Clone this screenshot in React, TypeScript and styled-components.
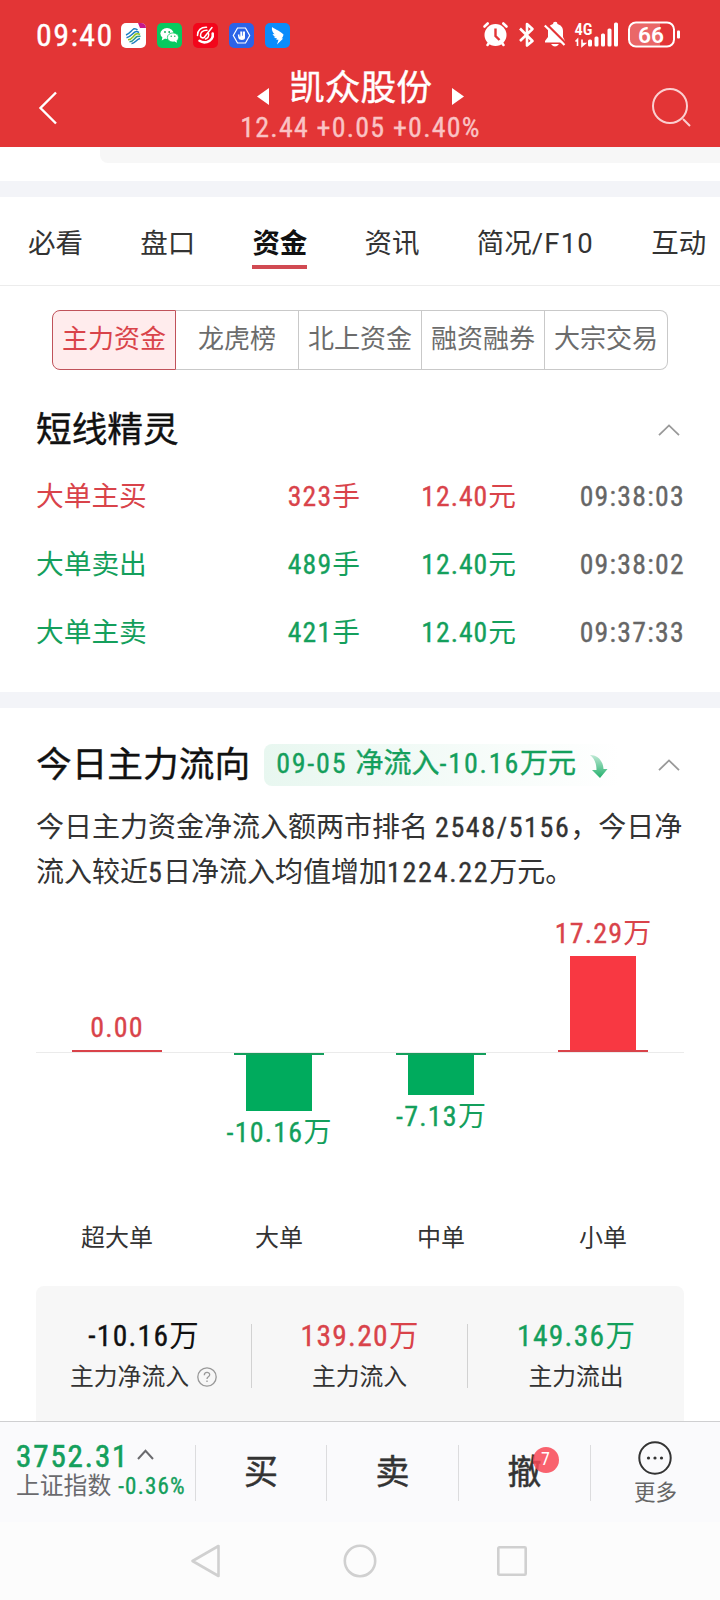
import React from "react";
import styled, { createGlobalStyle } from "styled-components";

const RED = "#d9434a";
const GREEN = "#149f5c";
const INK = "#333333";

const toneColor = { red: RED, green: GREEN, black: "#111111" };
type Tone = keyof typeof toneColor;

const GlobalStyle = createGlobalStyle`
  * { box-sizing: border-box; }
  body {
    margin: 0;
    background: #fff;
    font-family: Roboto, "Noto Sans CJK SC", sans-serif;
    color: ${INK};
  }
`;

const Screen = styled.div`
  width: 720px;
  height: 1600px;
  overflow: hidden;
  display: flex;
  flex-direction: column;
  background: #fff;
`;

const Num = styled.span<{ $ls?: number; $stroke?: number }>`
  font-family: "Roboto Condensed", Roboto, sans-serif;
  letter-spacing: ${(p) => p.$ls ?? 1.2}px;
  -webkit-text-stroke: ${(p) => p.$stroke ?? 0.35}px currentColor;
`;

/* ---------- header ---------- */

const Header = styled.header`
  height: 147px;
  flex: none;
  background: #e33536;
  color: #fff;
`;

const StatusBar = styled.div`
  height: 70px;
  padding: 0 40px 0 36px;
  display: flex;
  align-items: center;
  justify-content: space-between;
`;

const StatusGroup = styled.div<{ $gap: number }>`
  display: flex;
  align-items: center;
  gap: ${(p) => p.$gap}px;
`;

const Clock = styled.div`
  width: 74px;
  font-size: 32px;
  line-height: 35px;
  white-space: nowrap;
`;

const TitleBar = styled.div`
  height: 77px;
  padding: 0 29px 0 38px;
  display: flex;
  justify-content: space-between;
`;

const BackIcon = styled.svg`
  margin-top: 21px;
`;

const SearchIcon = styled.svg`
  margin-top: 17px;
`;

const StockHeading = styled.div`
  padding-left: 12px;
  display: flex;
  flex-direction: column;
  align-items: center;
`;

const StockName = styled.div`
  display: flex;
  gap: 20px;
  height: 39px;
  font-size: 35.7px;
  line-height: 36px;
  -webkit-text-stroke: 0.4px currentColor;
  svg { margin-top: 18px; }
`;

const Quote = styled.div`
  font-size: 28px;
  line-height: 38px;
  color: #fac3c4;
  white-space: nowrap;
`;

/* ---------- tabs ---------- */

const PeekCard = styled.div`
  height: 16px;
  flex: none;
  margin-left: 100px;
  background: #f7f7f7;
  border-bottom-left-radius: 8px;
`;

const Band = styled.div<{ $mt: number }>`
  height: 16px;
  flex: none;
  margin-top: ${(p) => p.$mt}px;
  background: #f3f4f8;
`;

const Tabs = styled.nav`
  height: 89px;
  flex: none;
  padding-left: 28px;
  display: flex;
  gap: 57.2px;
  border-bottom: 1px solid #ececec;
  white-space: nowrap;
`;

const Tab = styled.div<{ $active?: boolean }>`
  height: 72px;
  font-size: 27.5px;
  line-height: 93px;
  border-bottom: 4px solid ${(p) => (p.$active ? "#d14a52" : "transparent")};
  color: ${(p) => (p.$active ? "#111" : INK)};
  font-weight: ${(p) => (p.$active ? 700 : 400)};
`;

const TabLatin = styled.span`
  letter-spacing: 1.2px;
`;

const Segments = styled.div`
  flex: none;
  height: 60px;
  margin: 24px 52px 0;
  display: grid;
  grid-template-columns: 124px repeat(4, 1fr);
`;

const Segment = styled.div<{ $active?: boolean }>`
  border: 1px solid ${(p) => (p.$active ? "#c0525a" : "#c9c9c9")};
  border-left-width: ${(p) => (p.$active ? 1 : 0)}px;
  background: ${(p) => (p.$active ? "#ffeced" : "#fff")};
  color: ${(p) => (p.$active ? RED : "#6c6c6c")};
  font-size: 26px;
  line-height: 56px;
  text-align: center;
  white-space: nowrap;
  &:first-child { border-radius: 8px 0 0 8px; }
  &:last-child { border-radius: 0 8px 8px 0; }
`;

/* ---------- sections ---------- */

const SectionHead = styled.div<{ $mt: number }>`
  flex: none;
  margin-top: ${(p) => p.$mt}px;
  height: 42px;
  padding: 0 40px 0 36px;
  display: flex;
  align-items: center;
`;

const SectionTitle = styled.h2`
  margin: 0;
  font-size: 35.7px;
  font-weight: 400;
  line-height: 44px;
  color: #111;
  -webkit-text-stroke: 0.4px currentColor;
`;

const Collapse = styled.svg`
  margin-left: auto;
`;

const Trades = styled.div`
  flex: none;
  margin-top: 12px;
  padding: 0 36px;
`;

const Trade = styled.div<{ $tone: Tone }>`
  height: 68px;
  display: grid;
  grid-template-columns: 124px 200px 156px 169px;
  font-size: 27.7px;
  line-height: 68px;
  color: ${(p) => toneColor[p.$tone]};
  white-space: nowrap;
`;

const TradeCell = styled.div<{ $muted?: boolean }>`
  text-align: right;
  &:first-child { text-align: left; }
  ${(p) => (p.$muted ? "color: #666;" : "")}
`;

const FlowBadge = styled.div`
  height: 42px;
  width: 356px;
  margin-left: 14px;
  padding: 0 12px;
  border-radius: 8px;
  display: flex;
  gap: 14px;
  font-size: 28px;
  line-height: 40px;
  color: ${GREEN};
  white-space: nowrap;
  background: linear-gradient(90deg, #e8f7f0, #ffffff);
  -webkit-text-stroke: 0.4px currentColor;
  svg { margin-top: 10px; }
`;

const Summary = styled.p`
  flex: none;
  margin: 19px 36px 0;
  font-size: 28px;
  line-height: 45px;
  white-space: nowrap;
`;

/* ---------- chart ---------- */

const Chart = styled.div`
  flex: none;
  height: 360px;
  padding: 0 36px;
  margin-top: 11px;
  display: grid;
  grid-template-columns: repeat(4, 162px);
`;

const ChartColumn = styled.div<{ $tone: Tone }>`
  display: flex;
  flex-direction: column;
  align-items: center;
  color: ${(p) => toneColor[p.$tone]};
`;

const Above = styled.div`
  height: 146px;
  display: flex;
  flex-direction: column;
  justify-content: flex-end;
  align-items: center;
`;

const Below = styled.div`
  width: 100%;
  height: 170px;
  border-top: 1px solid #ebebeb;
  display: flex;
  flex-direction: column;
  align-items: center;
`;

const Tick = styled.div`
  width: 90px;
  height: 2px;
  background: currentColor;
`;

const Bar = styled.div<{ $up?: boolean }>`
  width: 66px;
  background: ${(p) => (p.$up ? "#f83842" : "#00ab5d")};
`;

const BarValue = styled.div`
  font-size: 28px;
  line-height: 43px;
  height: 44px;
  white-space: nowrap;
`;

const Category = styled.div`
  font-size: 24px;
  line-height: 32px;
  color: ${INK};
`;

/* ---------- summary card ---------- */

const Card = styled.div`
  flex: 1;
  margin: 20px 36px 0;
  padding-top: 38px;
  border-radius: 8px 8px 0 0;
  background: #f7f7f7;
  display: grid;
  grid-template-columns: repeat(3, 1fr);
`;

const CardItem = styled.div`
  height: 64px;
  display: flex;
  flex-direction: column;
  align-items: center;
  border-right: 1px solid #d2d2d2;
  &:last-child { border-right: 0; }
`;

const CardValue = styled.div<{ $tone: Tone }>`
  flex: none;
  font-size: 29.5px;
  line-height: 24px;
  height: 32px;
  color: ${(p) => toneColor[p.$tone]};
  white-space: nowrap;
`;

const CardLabel = styled.div`
  flex: none;
  display: flex;
  align-items: center;
  gap: 8px;
  font-size: 23.8px;
  line-height: 42px;
  height: 42px;
  white-space: nowrap;
`;

/* ---------- bottom bar ---------- */

const BottomBar = styled.div`
  height: 101px;
  flex: none;
  border-top: 1px solid #cfcfd1;
  background: #fafafc;
  display: grid;
  grid-template-columns: 196px 131px 132px 132px 129px;
`;

const BottomCell = styled.div`
  height: 56px;
  margin-top: 23px;
  border-right: 1px solid #dcdcde;
  display: flex;
  justify-content: center;
  &:last-child { border-right: 0; }
`;

const IndexCell = styled(BottomCell)`
  padding-left: 16px;
  flex-direction: column;
  justify-content: flex-start;
  white-space: nowrap;
`;

const IndexValue = styled.div`
  display: flex;
  gap: 8px;
  height: 27px;
  font-size: 31px;
  line-height: 24px;
  color: ${GREEN};
  svg { margin-top: 4px; }
`;

const IndexName = styled.div`
  font-size: 23.8px;
  line-height: 34px;
  color: #6a6a6e;
  display: flex;
  gap: 7px;
`;

const IndexChange = styled.span`
  font-size: 23px;
  line-height: 36px;
  color: ${GREEN};
`;

const Action = styled.div`
  position: relative;
  font-size: 34px;
  line-height: 54px;
  color: ${INK};
  -webkit-text-stroke: 0.5px currentColor;
`;

const CountBadge = styled.span`
  position: absolute;
  top: 2px;
  left: 25px;
  width: 26px;
  height: 26px;
  border-radius: 50%;
  background: rgba(248, 72, 86, 0.86);
  color: #fff;
  font-family: "Roboto Condensed", Roboto, sans-serif;
  font-size: 18px;
  line-height: 24px;
  text-align: center;
  -webkit-text-stroke: 0;
`;

const More = styled.div`
  margin-top: -4px;
  display: flex;
  flex-direction: column;
  align-items: center;
  font-size: 21.5px;
  line-height: 36px;
  color: #666;
  svg { flex: none; }
`;

const NavBar = styled.div`
  height: 78px;
  flex: none;
  background: #fcfcfc;
  display: flex;
  justify-content: center;
  align-items: center;
  gap: 118px;
`;

/* ---------- icons ---------- */

const Chevron = () => (
  <Collapse width="22" height="12" viewBox="0 0 22 12" fill="none" stroke="#999" strokeWidth="1.8">
    <path d="M1 11.2 11 1.4 21 11.2" />
  </Collapse>
);

const AppIcons = () => (
  <StatusGroup $gap={11}>
    <svg width="25" height="25" viewBox="0 0 25 25">
      <rect width="25" height="25" rx="5" fill="#fff" />
      <g fill="none" strokeWidth="1.5">
        <path d="M5 12c3-1 5-4 7.500-6q2-1 4 1" stroke="#1c7fc0" />
        <path d="M5.500 14.800c4-1 5.500-4 8.500-6q2-1 4 .8" stroke="#1c7fc0" />
        <path d="M7 16.800c4 0 4.500-3.500 8-5.800q2-.8 4 .5" stroke="#8dc21f" />
        <path d="M8.500 18.800c4 0 4.500-3.500 7.500-5.300l3.500-.3" stroke="#2b9a8e" />
        <path d="M10.500 20.500c3.500.3 4.500-4 8.500-5" stroke="#1c7fc0" />
      </g>
      <path d="M17 0h3a5 5 0 0 1 5 5H19z" fill="#c8168c" />
    </svg>
    <svg width="25" height="25" viewBox="0 0 25 25">
      <rect width="25" height="25" rx="5" fill="#07c95f" />
      <ellipse cx="10" cy="10.500" rx="6.600" ry="5.400" fill="#fff" />
      <path d="M5.500 14l-.8 3.500 3.500-2z" fill="#fff" />
      <ellipse cx="16" cy="14.500" rx="5.600" ry="4.600" fill="#fff" stroke="#07c95f" strokeWidth=".8" />
      <path d="M17.500 18.500l2.500 1.300-.5-2.800z" fill="#fff" />
      <g fill="#07a94f">
        <circle cx="8" cy="9" r=".9" /><circle cx="12.200" cy="9" r=".9" />
        <circle cx="14.200" cy="13.300" r=".7" /><circle cx="17.800" cy="13.300" r=".7" />
      </g>
    </svg>
    <svg width="25" height="25" viewBox="0 0 25 25">
      <rect width="25" height="25" rx="5" fill="#f2061b" />
      <g fill="none" stroke="#fff" strokeLinecap="round">
        <path d="M13.500 4.300C8 4 4.300 7.500 4.500 12.500" strokeWidth="1.500" />
        <path d="M14 7.300c-4-.2-7 2.200-6.500 5.700.4 2 2.500 2.400 4 1.300" strokeWidth="1.600" />
        <path d="M19 4.500 11.500 14" strokeWidth="1.500" />
        <path d="M19.700 10.500c.8 4-1.800 7.300-5.700 8.500-3 .8-5.500.2-7.500-1.200" strokeWidth="2.600" />
        <path d="M15.500 10.500c.8 2.500-.5 4.800-3 5.500" strokeWidth="1.500" />
      </g>
    </svg>
    <svg width="25" height="25" viewBox="0 0 25 25">
      <rect width="25" height="25" rx="5" fill="#2b63e8" />
      <path d="M8.500 5h8l4.200 7.500-4.200 7.500h-8l-4.200-7.500z" fill="none" stroke="#fff" strokeWidth="1.200" />
      <path d="M8.800 11.500h1.700v2h.8V8.500h2v4.300h.7V8.500h2v6.300c0 3-6 3-6.700 0z" fill="#fff" />
    </svg>
    <svg width="25" height="25" viewBox="0 0 25 25">
      <rect width="25" height="25" rx="5" fill="#0a8cfb" />
      <path d="M7 4c3.500 2.500 9 4.500 11.500 7.500-.2 2-1.300 3-1.800 4h1.500L12 21.500l1.500-4.700h-2.300l.8-1.500c-1.500 0-2.800-.6-3.200-1.500l2-.1c-2-.5-3-1.600-3.200-2.700l2 .3C7.500 9.500 6.500 7 7 4z" fill="#fff" />
    </svg>
  </StatusGroup>
);

const SystemIcons = () => (
  <svg width="204" height="30" viewBox="476 19.500 204 30" fill="#fff">
    <circle cx="495.500" cy="34.500" r="11" />
    <g stroke="#fff" strokeWidth="2.600" strokeLinecap="round">
      <path d="M484.500 26l3.200-3M506.500 26l-3.200-3M487.500 44.500l1.500-2M503.500 44.500l-1.500-2" />
    </g>
    <path d="M495.500 28v7.500l4 4" stroke="#e33536" strokeWidth="2.400" fill="none" />
    <path d="M520 28l12.500 12.500-5.500 4.500V23.500l5.500 5-12.500 12" fill="none" stroke="#fff" strokeWidth="2.600" strokeLinejoin="round" />
    <path d="M545 42v-1.500l3-4v-6c0-4 2-6 5-7a2.200 2.200 0 0 1 4.500 0c3 1 5.500 3 5.500 7v6l2 4v1.500zM551 43.500h8q-4 5-8 0z" />
    <path d="M546.500 23.500l20 20" stroke="#e33536" strokeWidth="2.400" />
    <path d="M544.800 25l19.700 19.500" stroke="#fff" strokeWidth="2.200" />
    <text x="574.500" y="34" fontFamily="Roboto Condensed" fontSize="16.500" fontWeight="600" textLength="18" lengthAdjust="spacingAndGlyphs">4G</text>
    <path d="M575.500 41l2-2v6.500M582 39v6.500l3-2.500h-3" fill="none" stroke="#fff" strokeWidth="1.600" />
    <rect x="588" y="39" width="4" height="7" rx="1.500" />
    <rect x="594.500" y="36" width="4" height="10" rx="1.500" />
    <rect x="601" y="33" width="4" height="13" rx="1.500" />
    <rect x="607.500" y="28" width="4" height="18" rx="1.500" />
    <rect x="614" y="22" width="4" height="24" rx="1.500" />
    <path d="M636 23h24v22h-24q-6 0-6-6V29q0-6 6-6z" opacity=".25" />
    <rect x="629" y="22" width="45" height="24" rx="7" fill="none" stroke="#fff" strokeWidth="2" />
    <rect x="677" y="30" width="3" height="8" rx="1" />
    <text x="638" y="42" fontSize="22" fontWeight="600" textLength="26" lengthAdjust="spacingAndGlyphs">66</text>
  </svg>
);

/* ---------- data ---------- */

const tabs: { name: string; latin?: string }[] = [
  { name: "必看" },
  { name: "盘口" },
  { name: "资金" },
  { name: "资讯" },
  { name: "简况", latin: "/F10" },
  { name: "互动" },
];
const segments = ["主力资金", "龙虎榜", "北上资金", "融资融券", "大宗交易"];

const trades: { kind: string; lots: string; price: string; time: string; tone: Tone }[] = [
  { kind: "大单主买", lots: "323", price: "12.40", time: "09:38:03", tone: "red" },
  { kind: "大单卖出", lots: "489", price: "12.40", time: "09:38:02", tone: "green" },
  { kind: "大单主卖", lots: "421", price: "12.40", time: "09:37:33", tone: "green" },
];

const flows: { name: string; value: string; unit: string; bar: number; tone: Tone }[] = [
  { name: "超大单", value: "0.00", unit: "", bar: 0, tone: "red" },
  { name: "大单", value: "-10.16", unit: "万", bar: -56, tone: "green" },
  { name: "中单", value: "-7.13", unit: "万", bar: -40, tone: "green" },
  { name: "小单", value: "17.29", unit: "万", bar: 94, tone: "red" },
];

const totals: { value: string; label: string; tone: Tone; help?: boolean }[] = [
  { value: "-10.16", label: "主力净流入", tone: "black", help: true },
  { value: "139.20", label: "主力流入", tone: "red" },
  { value: "149.36", label: "主力流出", tone: "green" },
];

export default function App() {
  return (
    <Screen lang="zh-CN">
      <GlobalStyle />
      <Header>
        <StatusBar>
          <StatusGroup $gap={11}>
            <Clock><Num $ls={1.4}>09:40</Num></Clock>
            <AppIcons />
          </StatusGroup>
          <SystemIcons />
        </StatusBar>
        <TitleBar>
          <BackIcon width="20" height="34" viewBox="0 0 20 34" fill="none" stroke="#fff" strokeWidth="2.400">
            <path d="M18 1.500 2.500 17 18 32.500" />
          </BackIcon>
          <StockHeading>
            <StockName>
              <svg width="12" height="17" viewBox="0 0 12 17" fill="#fff"><path d="M12 0v17L0 8.500z" /></svg>
              凯众股份
              <svg width="12" height="17" viewBox="0 0 12 17" fill="#fff"><path d="M0 0v17l12-8.500z" /></svg>
            </StockName>
            <Quote><Num $ls={1.2}>12.44 +0.05 +0.40%</Num></Quote>
          </StockHeading>
          <SearchIcon width="40" height="41" viewBox="0 0 40 41" fill="none" stroke="#fbcfd0" strokeWidth="2">
            <circle cx="19" cy="19" r="17" />
            <path d="M32 32l7 7" />
          </SearchIcon>
        </TitleBar>
      </Header>

      <PeekCard />
      <Band $mt={18} />

      <Tabs>
        {tabs.map((t) => (
          <Tab key={t.name} $active={t.name === "资金"}>
            {t.name}
            {t.latin && <TabLatin>{t.latin}</TabLatin>}
          </Tab>
        ))}
      </Tabs>
      <Segments>
        {segments.map((s, i) => (
          <Segment key={s} $active={i === 0}>{s}</Segment>
        ))}
      </Segments>

      <SectionHead $mt={39}>
        <SectionTitle>短线精灵</SectionTitle>
        <Chevron />
      </SectionHead>
      <Trades>
        {trades.map((t) => (
          <Trade key={t.time} $tone={t.tone}>
            <TradeCell>{t.kind}</TradeCell>
            <TradeCell><Num>{t.lots}</Num>手</TradeCell>
            <TradeCell><Num $ls={1}>{t.price}</Num>元</TradeCell>
            <TradeCell $muted><Num $ls={1.3}>{t.time}</Num></TradeCell>
          </Trade>
        ))}
      </Trades>
      <Band $mt={25} />

      <SectionHead $mt={36}>
        <SectionTitle>今日主力流向</SectionTitle>
        <FlowBadge>
          <span><Num $ls={1.8}>09-05 </Num>净流入<Num $ls={1.8}>-10.16</Num>万元</span>
          <svg width="18" height="26" viewBox="0 0 18 26">
            <defs>
              <linearGradient id="fall" x1="0" y1="0" x2="0" y2="1">
                <stop offset="0" stopColor="#bfe9d5" />
                <stop offset="1" stopColor="#22b06b" />
              </linearGradient>
            </defs>
            <path d="M0 1c7 0 13 5 13.500 14H17.500l-7.500 9-8-8h4.500C6.500 9 4 4 0 1z" fill="url(#fall)" />
          </svg>
        </FlowBadge>
        <Chevron />
      </SectionHead>
      <Summary>
        今日主力资金净流入额两市排名 <Num $ls={1.6}>2548/5156</Num>，今日净<br />
        流入较近<Num>5</Num>日净流入均值增加<Num $ls={1.7}>1224.22</Num>万元。
      </Summary>

      <Chart>
        {flows.map((f) => {
          const value = <BarValue><Num>{f.value}</Num>{f.unit}</BarValue>;
          return (
            <ChartColumn key={f.name} $tone={f.tone}>
              <Above>
                {f.bar >= 0 && (
                  <>
                    {value}
                    <Bar $up style={{ height: f.bar }} />
                    <Tick />
                  </>
                )}
              </Above>
              <Below>
                {f.bar < 0 && (
                  <>
                    <Tick />
                    <Bar style={{ height: -f.bar }} />
                    {value}
                  </>
                )}
              </Below>
              <Category>{f.name}</Category>
            </ChartColumn>
          );
        })}
      </Chart>

      <Card>
        {totals.map((t) => (
          <CardItem key={t.label}>
            <CardValue $tone={t.tone}><Num $ls={1.3}>{t.value}</Num>万</CardValue>
            <CardLabel>
              {t.label}
              {t.help && (
                <svg width="20" height="20" viewBox="0 0 20 20" fill="none" stroke="#999" strokeWidth="1.300">
                  <circle cx="10" cy="10" r="9.200" />
                  <path d="M7.300 8.200c0-3.700 5.400-3.500 5.400-.4 0 2-2.700 2-2.700 4.200M10 13.400v1.700" />
                </svg>
              )}
            </CardLabel>
          </CardItem>
        ))}
      </Card>

      <BottomBar>
        <IndexCell>
          <IndexValue>
            <Num $ls={1.9} $stroke={0.6}>3752.31</Num>
            <svg width="17" height="11" viewBox="0 0 17 11" fill="none" stroke="#6a6a6e" strokeWidth="2">
              <path d="M1 10 8.500 1.800 16 10" />
            </svg>
          </IndexValue>
          <IndexName>上证指数<IndexChange><Num>-0.36%</Num></IndexChange></IndexName>
        </IndexCell>
        <BottomCell><Action>买</Action></BottomCell>
        <BottomCell><Action>卖</Action></BottomCell>
        <BottomCell><Action>撤<CountBadge>7</CountBadge></Action></BottomCell>
        <BottomCell>
          <More>
            <svg width="34" height="34" viewBox="0 0 34 34" fill="none" stroke="#333" strokeWidth="2">
              <circle cx="17" cy="17" r="15.700" />
              <g fill="#333" stroke="none">
                <circle cx="10.500" cy="17" r="1.600" /><circle cx="17" cy="17" r="1.600" /><circle cx="23.500" cy="17" r="1.600" />
              </g>
            </svg>
            更多
          </More>
        </BottomCell>
      </BottomBar>
      <NavBar>
        <svg width="34" height="34" viewBox="0 0 34 34" fill="none" stroke="#d0d0d0" strokeWidth="2.600" strokeLinejoin="round">
          <path d="M27.500 2v30L1.500 17z" />
        </svg>
        <svg width="34" height="34" viewBox="0 0 34 34" fill="none" stroke="#d0d0d0" strokeWidth="2.600">
          <circle cx="17" cy="17" r="15.200" />
        </svg>
        <svg width="34" height="34" viewBox="0 0 34 34" fill="none" stroke="#d0d0d0" strokeWidth="2.600">
          <rect x="3.300" y="3.300" width="27.400" height="27.400" rx="1" />
        </svg>
      </NavBar>
    </Screen>
  );
}
